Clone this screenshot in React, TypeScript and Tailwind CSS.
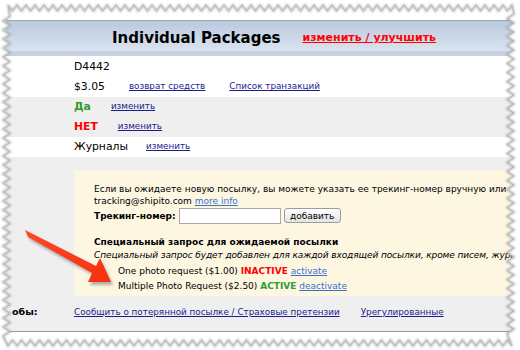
import { useMemo } from 'react';

const W = 520;
const H = 350;

// points of the torn paper edge, clockwise
function tornEdge(): string {
  const pts: string[] = [];
  const step = 9;
  for (let x = 8, i = 0; x <= 512; x += step / 2, i++) pts.push(`${x},${i % 2 ? 11 : 5}`);
  for (let y = 14, i = 0; y <= 336; y += step / 2, i++) pts.push(`${i % 2 ? 507 : 514},${y}`);
  for (let x = 512, i = 0; x >= 8; x -= step / 2, i++) pts.push(`${x},${i % 2 ? 340 : 346}`);
  for (let y = 336, i = 0; y >= 14; y -= step / 2, i++) pts.push(`${i % 2 ? 10 : 3},${y}`);
  return pts.join(' ');
}

function PaperEdge() {
  const edge = useMemo(tornEdge, []);
  return (
    <svg className="pointer-events-none absolute inset-0" width={W} height={H}>
      <defs>
        <filter id="edgeShadow" x="-5%" y="-5%" width="110%" height="110%">
          <feGaussianBlur stdDeviation="1.2" />
        </filter>
        <mask id="outside">
          <rect width={W} height={H} fill="white" />
          <polygon points={edge} fill="black" />
        </mask>
      </defs>
      <rect width={W} height={H} fill="white" mask="url(#outside)" />
      <polygon points={edge} fill="none" stroke="#9a9a9a" strokeWidth="2" filter="url(#edgeShadow)" opacity="0.7" />
      <polygon points={edge} fill="none" stroke="#b5b5b5" strokeWidth="0.8" />
    </svg>
  );
}

const ARROW = '25,230 28,237 92,273 88,282 111,282 100,258 96,266';

function RedArrow() {
  return (
    <svg className="pointer-events-none absolute left-0 top-0" width={130} height={300}>
      <defs>
        <filter id="arrowShadow" x="-20%" y="-20%" width="140%" height="140%">
          <feGaussianBlur stdDeviation="1.6" />
        </filter>
        <linearGradient id="arrowFill" x1="0" y1="0" x2="1" y2="1">
          <stop offset="0" stopColor="#ff4a2a" />
          <stop offset="1" stopColor="#f5300f" />
        </linearGradient>
      </defs>
      <g transform="translate(2 3)" filter="url(#arrowShadow)" opacity="0.45">
        <polygon points={ARROW} fill="#555" />
      </g>
      <polygon points={ARROW} fill="url(#arrowFill)" />
    </svg>
  );
}

function Link({ children, className = '' }: { children: React.ReactNode; className?: string }) {
  return <a className={`cursor-pointer text-[8.8px] text-[#1c1c8a] underline ${className}`}>{children}</a>;
}

export default function App() {
  return (
    <div className="relative h-[350px] w-[520px] overflow-hidden bg-white font-['DejaVu_Sans',sans-serif] text-[9px] text-black">
      <div className="pl-[6px] pr-[6px] pt-[20px]">
        {/* header */}
        <div className="flex h-[36px] items-center border-b-[5px] border-t border-b-[#c6d2e3] border-t-[#9ea7b3] bg-gradient-to-b from-[#b9c9de] to-[#dbe4ef] pl-[106px] pt-[5px]">
          <h1 className="text-[15px] font-bold">Individual Packages</h1>
          <a className="ml-[22px] cursor-pointer text-[11px] font-bold text-[#ff0000] underline">изменить / улучшить</a>
        </div>

        {/* rows */}
        <div className="bg-white pl-[68px] pt-[1px]">
          <div className="flex h-[20px] items-center text-[10.8px]">D4442</div>
          <div className="flex h-[20px] items-center gap-[24px]">
            <span className="text-[10.8px]">$3.05</span>
            <Link>возврат средств</Link>
            <Link>Список транзакций</Link>
          </div>
        </div>
        <div className="bg-[#efefef] pl-[68px]">
          <div className="flex h-[20px] items-center gap-[20px]">
            <span className="text-[10.8px] font-bold text-[#2f9b2f]">Да</span>
            <Link>изменить</Link>
          </div>
          <div className="flex h-[20px] items-center gap-[20px]">
            <span className="text-[10.8px] font-bold text-[#ff0000]">НЕТ</span>
            <Link>изменить</Link>
          </div>
        </div>
        <div className="bg-white pl-[68px]">
          <div className="flex h-[20px] items-center gap-[18px]">
            <span className="text-[10.8px]">Журналы</span>
            <Link>изменить</Link>
          </div>
        </div>

        <div className="border-b border-[#9a9a9a] bg-[#efefef] pb-[12px] pt-[13px]">
          {/* tracking box */}
          <div className="ml-[68px] overflow-hidden whitespace-nowrap bg-[#fdf7e2] pb-[2px] pl-[20px] pt-[13px] leading-[12px]">
            <div>Если вы ожидаете новую посылку, вы можете указать ее трекинг-номер вручную или в</div>
            <div>
              tracking@shipito.com <a className="cursor-pointer text-[#3b6fd1] underline">more info</a>
            </div>
            <div className="flex h-[17px] items-center">
              <span className="font-bold">Трекинг-номер:</span>
              <input className="ml-[3px] h-[16px] w-[102px] border border-[#a8a8a8] bg-white" />
              <button className="ml-[3px] h-[15px] w-[57px] rounded-[3px] border border-[#9c9c9c] bg-gradient-to-b from-white to-[#e4e4e4] text-[9px] leading-[12px]">
                добавить
              </button>
            </div>
            <div className="mt-[12px] font-bold">Специальный запрос для ожидаемой посылки</div>
            <div className="mt-[1px] italic tracking-[-0.1px]">
              Специальный запрос будет добавлен для каждой входящей посылки, кроме писем, журн
            </div>
            <div className="mt-[3px] pl-[24px] leading-[15px]">
              <div>
                One photo request ($1.00) <span className="font-bold text-[#ff0000]">INACTIVE</span>{' '}
                <a className="cursor-pointer text-[#3b6fd1] underline">activate</a>
              </div>
              <div>
                Multiple Photo Request ($2.50) <span className="font-bold text-[#2f9b2f]">ACTIVE</span>{' '}
                <a className="cursor-pointer text-[#3b6fd1] underline">deactivate</a>
              </div>
            </div>
          </div>

          {/* bottom row */}
          <div className="mt-[9px] flex items-center whitespace-nowrap">
            <span className="w-[68px] pl-[6px] text-[9.5px] font-bold">обы:</span>
            <Link>Сообщить о потерянной посылке / Страховые претензии</Link>
            <Link className="ml-[21px]">Урегулированные</Link>
          </div>
        </div>
      </div>

      <RedArrow />
      <PaperEdge />
    </div>
  );
}
